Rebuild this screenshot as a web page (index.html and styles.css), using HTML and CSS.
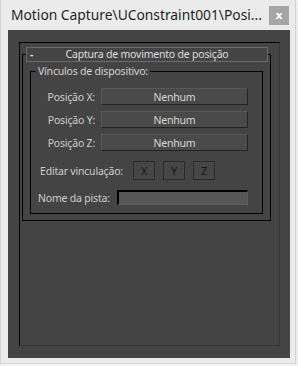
FILE: index.html
```html
<!DOCTYPE html>
<html lang="pt">
<head>
	<meta charset="UTF-8">
	<meta name="viewport" content="width=device-width, initial-scale=1.0">
	<title>Motion Capture</title>
	<link rel="stylesheet" href="styles.css">
</head>
<body>
	<div class="window">
		<div class="titlebar">
			<span class="title">Motion Capture\UConstraint001\Posi...</span>
			<button class="close">x</button>
		</div>
		<div class="client">
			<div class="panel">
				<fieldset class="rollout">
					<legend class="rollout-head">
						<span class="dash">-</span>
						<span class="rollout-title">Captura de movimento de posição</span>
						<span></span>
					</legend>
					<fieldset class="group">
						<legend class="group-title">Vínculos de dispositivo:</legend>
						<div class="bindings">
							<span class="label">Posição X:</span>
							<button class="pick">Nenhum</button>
							<span class="label">Posição Y:</span>
							<button class="pick">Nenhum</button>
							<span class="label">Posição Z:</span>
							<button class="pick">Nenhum</button>
						</div>
						<div class="edit-row">
							<span class="edit-label">Editar vinculação:</span>
							<button class="axis">X</button>
							<button class="axis">Y</button>
							<button class="axis">Z</button>
						</div>
						<div class="track-row">
							<span class="track-label">Nome da pista:</span>
							<input class="track-name" type="text">
						</div>
					</fieldset>
				</fieldset>
			</div>
		</div>
	</div>
</body>
</html>
```

FILE: styles.css
```css
* {
	box-sizing: border-box;
}
body {
	margin: 0;
	background-color: #f4f4f4;
	font-family: "Noto Sans", "Open Sans", sans-serif;
}
.window {
	width: 296px;
	height: 364px;
	background-color: #ebebeb;
	border: 1px solid #d2d2d2;
	border-top: none;
	box-shadow: 0 1px 2px rgba(0, 0, 0, 0.12);
	display: flex;
	flex-direction: column;
}
.titlebar {
	height: 30px;
	display: flex;
	align-items: flex-start;
	padding: 0 6px 0 10px;
}
.title {
	flex: 1;
	min-width: 0;
	overflow: hidden;
	font-size: 13.8px;
	line-height: 19px;
	padding-top: 5px;
	color: #1f1f1f;
	white-space: nowrap;
}
.close {
	flex: none;
	width: 20px;
	height: 19px;
	margin-top: 6px;
	border: none;
	padding: 0;
	background-color: #a5a5a5;
	color: #fff;
	font-family: "DejaVu Sans", sans-serif;
	font-size: 11px;
	font-weight: bold;
	line-height: 17px;
}
.client {
	width: 282px;
	height: 328px;
	margin-left: 7px;
	background-color: #444;
	padding: 12px 10px 12px 11px;
	display: flex;
	flex-direction: column;
	font-size: 10.5px;
	letter-spacing: -0.2px;
	color: #cdcdcd;
}
.panel {
	flex: 1;
	border: 1px solid #363636;
	border-top-color: #000;
	border-left-color: #000;
	padding: 4px 8px 0 2px;
}
fieldset {
	margin: 0;
	min-width: 0;
}
.rollout {
	border: 1px solid #000;
	padding: 0 0 6px 3px;
}
.rollout-head {
	width: 242px;
	height: 15px;
	padding: 0;
	border: 1px solid #6c6c6c;
	display: grid;
	grid-template-columns: 1fr auto 1fr;
	align-items: center;
	line-height: 13px;
	color: #dedede;
}
.dash {
	padding-left: 3px;
	font-weight: bold;
}
.group {
	margin: 3px 7px 0 4px;
	border: 1px solid #000;
	padding: 0 14px 8px 5px;
}
.group-title {
	padding: 0 2px;
	line-height: 13px;
	color: #d2d2d2;
}
.bindings {
	display: grid;
	grid-template-columns: 59px 147px;
	column-gap: 6px;
	row-gap: 6px;
	margin-top: 10px;
	align-items: center;
}
.label {
	text-align: right;
}
button {
	font-family: inherit;
	font-size: inherit;
	letter-spacing: inherit;
	cursor: pointer;
}
.pick {
	height: 17px;
	padding: 0;
	background-color: #4a4a4a;
	border: 1px solid #232323;
	border-top-color: #585858;
	border-left-color: #585858;
	color: #d6d6d6;
	line-height: 14px;
}
.edit-row {
	display: flex;
	align-items: center;
	margin-top: 10px;
	gap: 8px;
}
.edit-label {
	width: 85px;
	margin-left: 4px;
	white-space: nowrap;
}
.axis {
	width: 22px;
	height: 19px;
	padding: 0;
	background-color: #464646;
	border: 1px solid #2a2a2a;
	color: #161616;
	font-size: 11px;
}
.track-row {
	display: flex;
	align-items: center;
	margin-top: 10px;
}
.track-label {
	width: 79px;
	margin-left: 2px;
	white-space: nowrap;
}
.track-name {
	width: 131px;
	height: 15px;
	padding: 0;
	background-color: #575757;
	border: 1px solid #5e5e5e;
	border-top: 2px solid #000;
	border-left: 2px solid #000;
	outline: none;
}
```
